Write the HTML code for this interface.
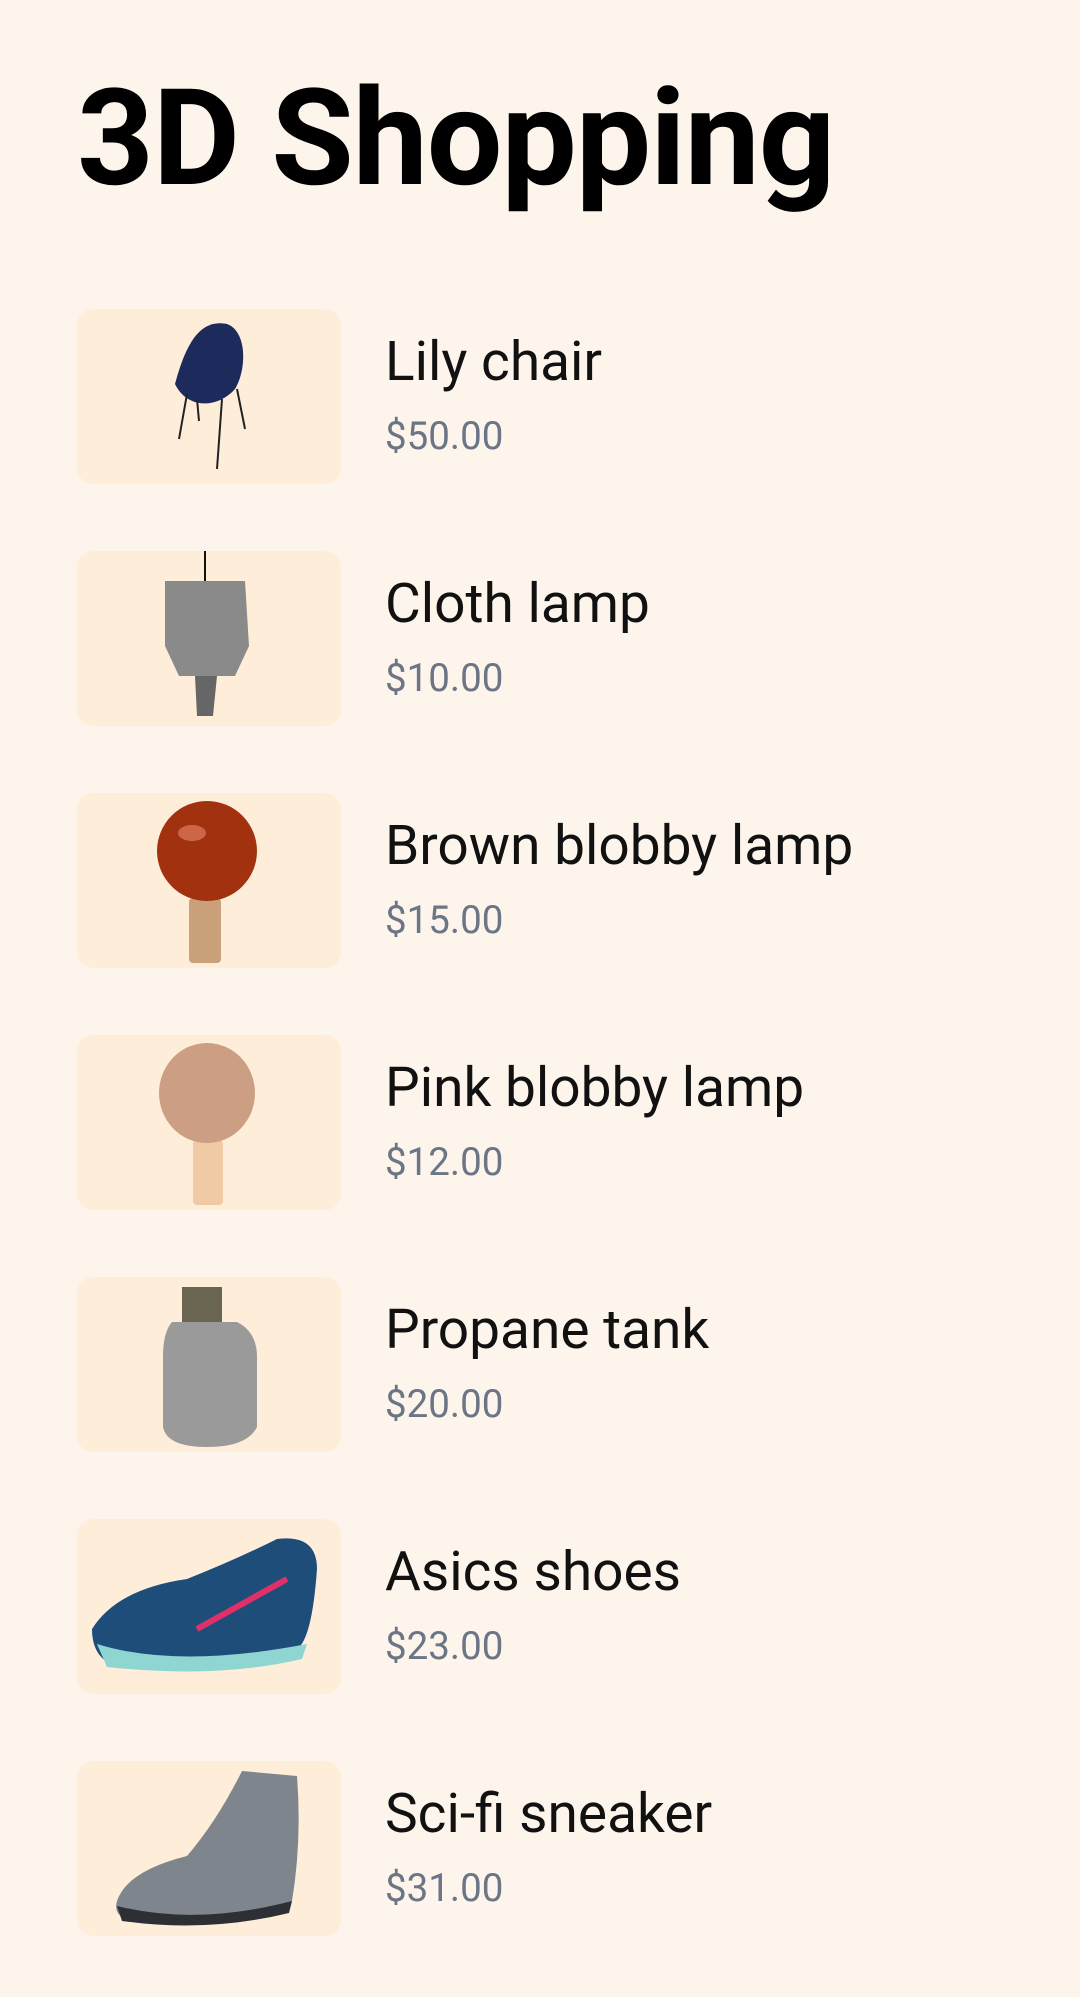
<!DOCTYPE html>
<html><head><meta charset="utf-8"><style>
body{margin:0;background:#fdf5ec;width:1080px;height:1997px;overflow:hidden;font-family:"Roboto","Liberation Sans",sans-serif;}
h1{position:absolute;left:77px;top:52px;margin:0;font-size:134px;font-weight:bold;color:#000;letter-spacing:-1px;line-height:1.3;}
.card{position:absolute;left:77px;width:264px;height:175px;background:#feeed9;border-radius:16px;overflow:hidden}
.card svg{position:absolute;left:0;top:0}
.name{position:absolute;left:385px;font-size:55px;color:#111;line-height:1}
.price{position:absolute;left:385px;font-size:38.5px;color:#6b7585;line-height:1}
</style></head><body>
<h1>3D Shopping</h1>

<div class="card" style="top:309px"><svg width="264" height="175"><path d="M98 75 C110 30 125 10 150 15 C170 22 170 60 158 80 C140 100 110 100 98 75Z" fill="#1d2a5c"/><g stroke="#222" stroke-width="2"><line x1="110" y1="85" x2="102" y2="130"/><line x1="145" y1="90" x2="140" y2="160"/><line x1="160" y1="80" x2="168" y2="120"/><line x1="120" y1="90" x2="122" y2="112"/></g></svg></div>
<div class="name" style="top:335px">Lily chair</div><div class="price" style="top:418px">$50.00</div>

<div class="card" style="top:551px"><svg width="264" height="175"><line x1="128" y1="0" x2="128" y2="30" stroke="#111" stroke-width="2"/><path d="M88 30 L168 30 L172 95 L158 125 L102 125 L88 95Z" fill="#8a8a8a"/><path d="M118 125 L140 125 L136 165 L120 165Z" fill="#666"/></svg></div>
<div class="name" style="top:577px">Cloth lamp</div><div class="price" style="top:660px">$10.00</div>

<div class="card" style="top:793px"><svg width="264" height="175"><rect x="112" y="105" width="32" height="65" rx="4" fill="#c9a07a"/><circle cx="130" cy="58" r="50" fill="#a2320f"/><ellipse cx="115" cy="40" rx="14" ry="8" fill="#e8896a" opacity=".6"/></svg></div>
<div class="name" style="top:819px">Brown blobby lamp</div><div class="price" style="top:902px">$15.00</div>

<div class="card" style="top:1035px"><svg width="264" height="175"><rect x="116" y="105" width="30" height="65" rx="4" fill="#f0c9a5"/><ellipse cx="130" cy="58" rx="48" ry="50" fill="#cc9f84"/></svg></div>
<div class="name" style="top:1061px">Pink blobby lamp</div><div class="price" style="top:1144px">$12.00</div>

<div class="card" style="top:1277px"><svg width="264" height="175"><rect x="105" y="10" width="40" height="35" fill="#6a6550"/><path d="M95 45 L160 45 Q180 55 180 80 L180 150 Q170 170 130 170 Q90 170 86 150 L86 80 Q86 55 95 45Z" fill="#9a9a9a"/></svg></div>
<div class="name" style="top:1303px">Propane tank</div><div class="price" style="top:1386px">$20.00</div>

<div class="card" style="top:1519px"><svg width="264" height="175"><path d="M15 110 Q40 70 110 60 Q160 40 200 20 Q240 15 240 50 Q235 120 220 130 Q150 150 60 150 Q15 150 15 110Z" fill="#1f4d7a"/><path d="M20 125 Q100 150 230 125 L225 140 Q140 160 30 148Z" fill="#8fd6d2"/><path d="M120 110 L210 60" stroke="#e0306a" stroke-width="6"/></svg></div>
<div class="name" style="top:1545px">Asics shoes</div><div class="price" style="top:1628px">$23.00</div>

<div class="card" style="top:1761px"><svg width="264" height="175"><path d="M40 140 Q50 110 110 95 Q140 60 165 10 L220 15 Q225 80 215 140 Q180 160 60 160 Q35 158 40 140Z" fill="#7f858c"/><path d="M40 145 Q120 165 215 140 L212 152 Q130 172 45 160Z" fill="#2c2f33"/></svg></div>
<div class="name" style="top:1787px">Sci-fi sneaker</div><div class="price" style="top:1870px">$31.00</div>
</body></html>
